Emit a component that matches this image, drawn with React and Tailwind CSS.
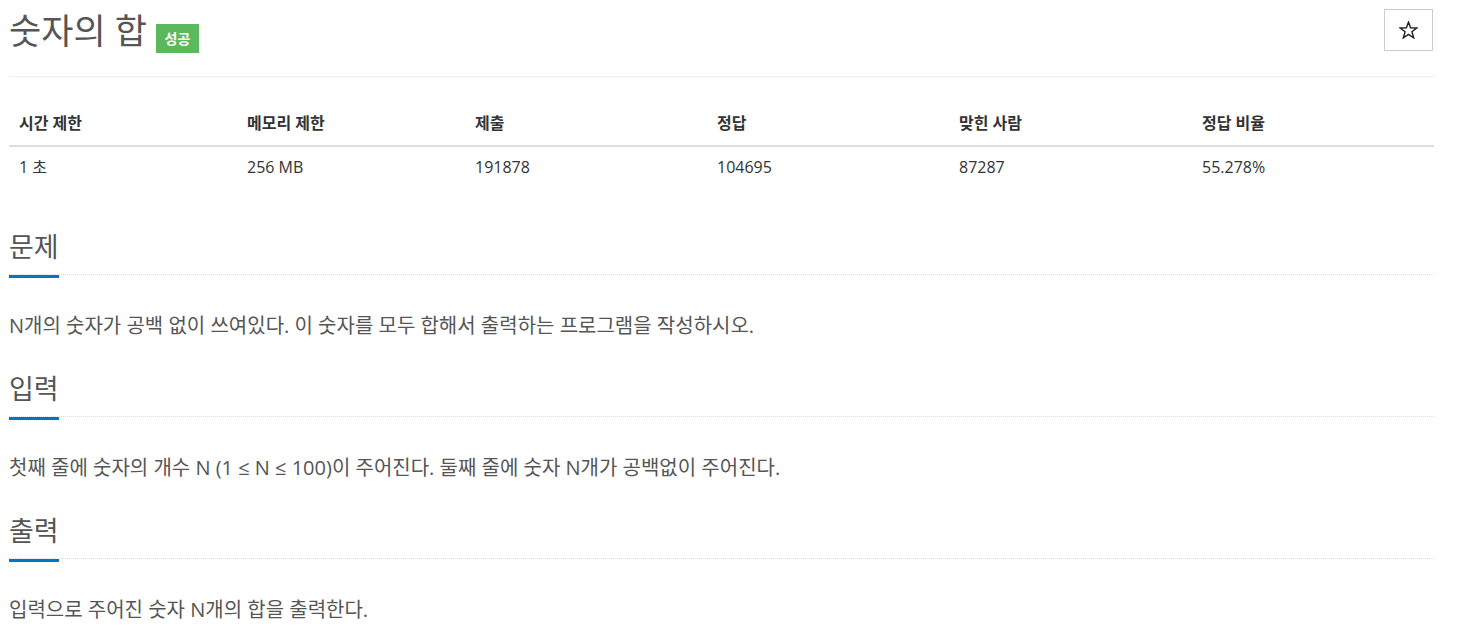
import React from "react";

const stats = [
  { label: "시간 제한", value: "1 초" },
  { label: "메모리 제한", value: "256 MB" },
  { label: "제출", value: "191878" },
  { label: "정답", value: "104695" },
  { label: "맞힌 사람", value: "87287" },
  { label: "정답 비율", value: "55.278%" },
];

const sections = [
  {
    title: "문제",
    body: "N개의 숫자가 공백 없이 쓰여있다. 이 숫자를 모두 합해서 출력하는 프로그램을 작성하시오.",
  },
  {
    title: "입력",
    body: "첫째 줄에 숫자의 개수 N (1 ≤ N ≤ 100)이 주어진다. 둘째 줄에 숫자 N개가 공백없이 주어진다.",
  },
  {
    title: "출력",
    body: "입력으로 주어진 숫자 N개의 합을 출력한다.",
  },
];

const StarIcon = () => (
  <svg width="19" height="18" viewBox="0 0 19 18" fill="none">
    <polygon
      points="9.5,1 11.6,6.8 17.8,7 12.9,10.8 14.7,16.8 9.5,13.3 4.3,16.8 6.1,10.8 1.2,7 7.4,6.8"
      stroke="#222"
      strokeWidth="1.4"
      strokeLinejoin="miter"
    />
  </svg>
);

const Section = ({ title, body }) => (
  <section className="mb-[30px]">
    <div className="flex border-b border-dotted border-[#dcdcdc]">
      <h2 className="-mb-[4px] border-b-[3px] border-[#0076c0] pb-[10px] text-[27px] leading-[36px] font-normal text-[#555]">
        {title}
      </h2>
    </div>
    <p className="mt-[36px] text-[20px] leading-[30px] text-[#555]">{body}</p>
  </section>
);

export default function App() {
  return (
    <div
      className="min-h-screen bg-white"
      style={{ fontFamily: '"Open Sans", "Noto Sans CJK KR", sans-serif' }}
    >
      <div className="ml-[9px] w-[1425px]">
        <div className="flex h-[77px] items-start border-b border-[#eee]">
          <h1 className="mt-[9px] text-[35px] leading-[44px] font-normal text-[#555]">
            숫자의 합
          </h1>
          <span className="ml-[9px] mt-[24px] flex h-[29px] w-[43px] items-center justify-center bg-[#5cb85c] text-[14px] font-semibold text-white">
            성공
          </span>
          <button className="ml-auto mr-[1px] mt-[9px] flex h-[42px] w-[49px] items-center justify-center border border-[#ccc] bg-white">
            <StarIcon />
          </button>
        </div>

        <div className="grid grid-cols-[228px_228px_242px_242px_243px_1fr] text-[16px] leading-[22px] text-[#333]">
          {stats.map((s) => (
            <div
              key={s.label}
              className="border-b-2 border-[#ddd] px-[10px] pt-[35px] pb-[11px] font-bold"
            >
              {s.label}
            </div>
          ))}
          {stats.map((s) => (
            <div key={s.label + "-v"} className="px-[10px] py-[9px]">
              {s.value}
            </div>
          ))}
        </div>

        <div className="mt-[42px]">
          {sections.map((s) => (
            <Section key={s.title} title={s.title} body={s.body} />
          ))}
        </div>
      </div>
    </div>
  );
}
